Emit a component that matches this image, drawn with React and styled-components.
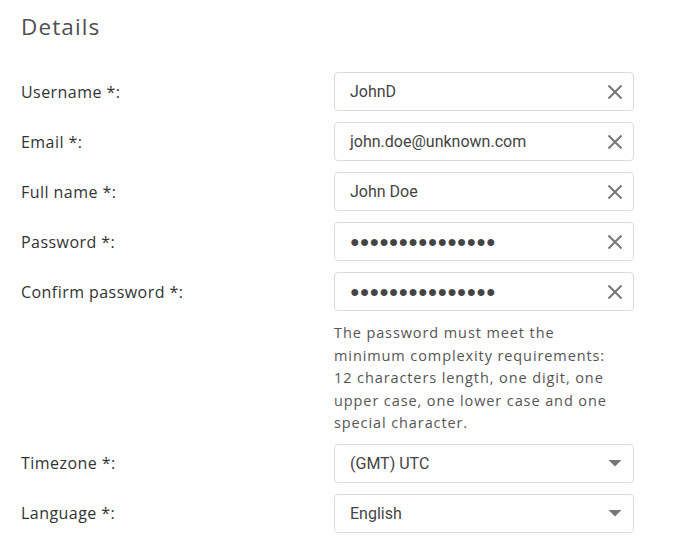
import React from "react";
import styled, { createGlobalStyle } from "styled-components";

const GlobalStyle = createGlobalStyle`
  body {
    margin: 0;
    background: #fff;
  }
`;

const Page = styled.div`
  padding: 13px 0 0 21px;
  width: 613px;
`;

const Title = styled.h2`
  margin: 0 0 31px;
  font-family: "Open Sans", "Noto Sans", sans-serif;
  font-size: 22.5px;
  font-weight: 400;
  letter-spacing: 1.1px;
  line-height: 28px;
  color: #505050;
`;

const Form = styled.div`
  display: grid;
  grid-template-columns: 313px 300px;
  row-gap: 11px;
  align-items: center;
`;

const Label = styled.label`
  font-family: "Open Sans", "Noto Sans", sans-serif;
  font-size: 16px;
  letter-spacing: 0.45px;
  color: #333;
`;

const Field = styled.div`
  display: flex;
  align-items: center;
  height: 39px;
  box-sizing: border-box;
  border: 1px solid #dcdcdc;
  border-radius: 4px;
  padding: 0 8px 0 15px;
  background: #fff;
`;

const Value = styled.span`
  flex: 1;
  font-family: "Roboto", sans-serif;
  font-size: 16px;
  color: #444;
  letter-spacing: ${(p) => (p.$secret ? "0.05px" : "0")};
`;

const IconButton = styled.span`
  display: flex;
  align-items: center;
  justify-content: center;
  width: 20px;
  height: 20px;
  color: #777;
`;

const Hint = styled.p`
  grid-column: 2;
  margin: 0 0 -2px;
  font-family: "Open Sans", "Noto Sans", sans-serif;
  font-size: 14.5px;
  letter-spacing: 0.9px;
  line-height: 22.6px;
  color: #555;
  white-space: nowrap;
`;

const ClearIcon = () => (
  <svg width="16" height="16" viewBox="0 0 16 16">
    <path d="M1.5 1.5 L14.5 14.5 M14.5 1.5 L1.5 14.5" stroke="currentColor" strokeWidth="2" fill="none" />
  </svg>
);

const CaretIcon = () => (
  <svg width="14" height="8" viewBox="0 0 14 8">
    <path d="M0.5 1 L13.5 1 L7 7.5 Z" fill="currentColor" />
  </svg>
);

const textFields = [
  { label: "Username *:", value: "JohnD" },
  { label: "Email *:", value: "john.doe@unknown.com" },
  { label: "Full name *:", value: "John Doe" },
  { label: "Password *:", value: "●●●●●●●●●●●●●●●", secret: true },
  { label: "Confirm password *:", value: "●●●●●●●●●●●●●●●", secret: true },
];

const selectFields = [
  { label: "Timezone *:", value: "(GMT) UTC" },
  { label: "Language *:", value: "English" },
];

export default function App() {
  return (
    <>
      <GlobalStyle />
      <Page>
        <Title>Details</Title>
        <Form>
          {textFields.map((f) => (
            <React.Fragment key={f.label}>
              <Label>{f.label}</Label>
              <Field>
                <Value $secret={f.secret}>{f.value}</Value>
                <IconButton>
                  <ClearIcon />
                </IconButton>
              </Field>
            </React.Fragment>
          ))}
          <Hint>
            The password must meet the
            <br />
            minimum complexity requirements:
            <br />
            12 characters length, one digit, one
            <br />
            upper case, one lower case and one
            <br />
            special character.
          </Hint>
          {selectFields.map((f) => (
            <React.Fragment key={f.label}>
              <Label>{f.label}</Label>
              <Field>
                <Value>{f.value}</Value>
                <IconButton>
                  <CaretIcon />
                </IconButton>
              </Field>
            </React.Fragment>
          ))}
        </Form>
      </Page>
    </>
  );
}
